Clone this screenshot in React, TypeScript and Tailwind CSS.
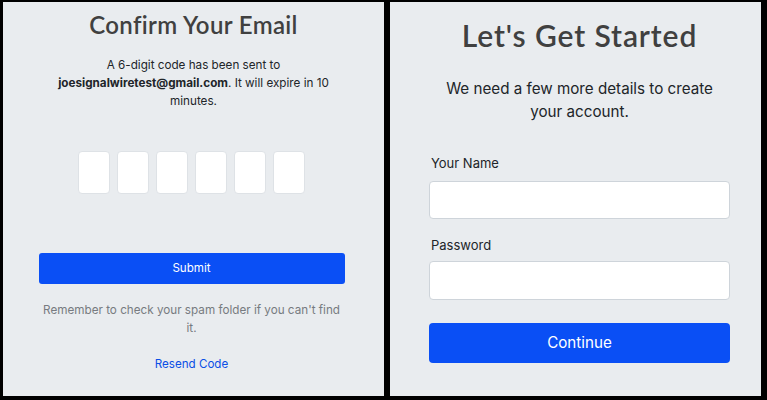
const inter = "font-['Inter','Noto_Sans',sans-serif]"
const heading = "font-['Lato','Noto_Sans',sans-serif]"

const ConfirmEmail = () => {
    const digits = [0, 1, 2, 3, 4, 5]
    return (
        <div className={`w-[381px] h-full bg-[#e9ecef] flex flex-col items-center pt-[7px] ${inter}`}>
            <h1 className={`text-[24px] leading-[32px] font-semibold tracking-[0.35px] text-[#404040] ${heading}`}>Confirm Your Email</h1>
            <p className="mt-[15px] w-[290px] text-center text-[11.7px] leading-[18px] text-[#212529]">
                A 6-digit code has been sent to <span className="font-bold">joesignalwiretest@gmail.com</span>. It will expire in 10 minutes.
            </p>
            <div className="mt-[41px] flex gap-[7px] pr-[4px]">
                {digits.map((d) => (
                    <input key={d} type="text" maxLength={1} className="w-[32px] h-[43px] bg-white border border-[#dee2e6] rounded-[4px]" />
                ))}
            </div>
            <button className="mt-[59px] w-[306px] h-[31px] bg-[#0a4ff5] text-white text-[11.6px] rounded-[3px] mr-[4px]">
                Submit
            </button>
            <p className="mt-[17px] w-[306px] text-center text-[11.7px] leading-[18px] text-[#777b80] mr-[4px]">
                Remember to check your spam folder if you can't find it.
            </p>
            <a href="#" className="mt-[18px] text-[11.6px] leading-[18px] text-[#0b4fe6] mr-[4px]">Resend Code</a>
        </div>
    )
}

const GetStarted = () => {
    return (
        <div className={`w-[371px] h-full bg-[#e9ecef] flex flex-col pt-[15px] pl-[39px] pr-[31px] ${inter}`}>
            <h1 className={`text-center text-[30px] leading-[36px] font-semibold tracking-[0.9px] text-[#404040] ${heading}`}>Let's Get Started</h1>
            <p className="mt-[24px] text-center text-[15.2px] leading-[23px] text-[#212529] px-[12px]">
                We need a few more details to create your account.
            </p>
            <label className="mt-[30px] text-[13px] leading-[20px] text-[#212529] pl-[2px]">Your Name</label>
            <input type="text" className="mt-[8px] h-[38px] w-full bg-white border border-[#ced4da] rounded-[4px]" />
            <label className="mt-[16px] text-[13px] leading-[20px] text-[#212529] pl-[2px]">Password</label>
            <input type="password" className="mt-[6px] h-[39px] w-full bg-white border border-[#ced4da] rounded-[4px]" />
            <button className="mt-[23px] h-[40px] w-full bg-[#0a4ff5] text-white text-[15.2px] rounded-[4px]">
                Continue
            </button>
        </div>
    )
}

const App = () => {
    return (
        <div className="w-[767px] h-[400px] bg-black flex gap-[6px] pt-[2px] pl-[3px] pr-[6px] pb-[4px]">
            <ConfirmEmail />
            <GetStarted />
        </div>
    )
}

export default App
